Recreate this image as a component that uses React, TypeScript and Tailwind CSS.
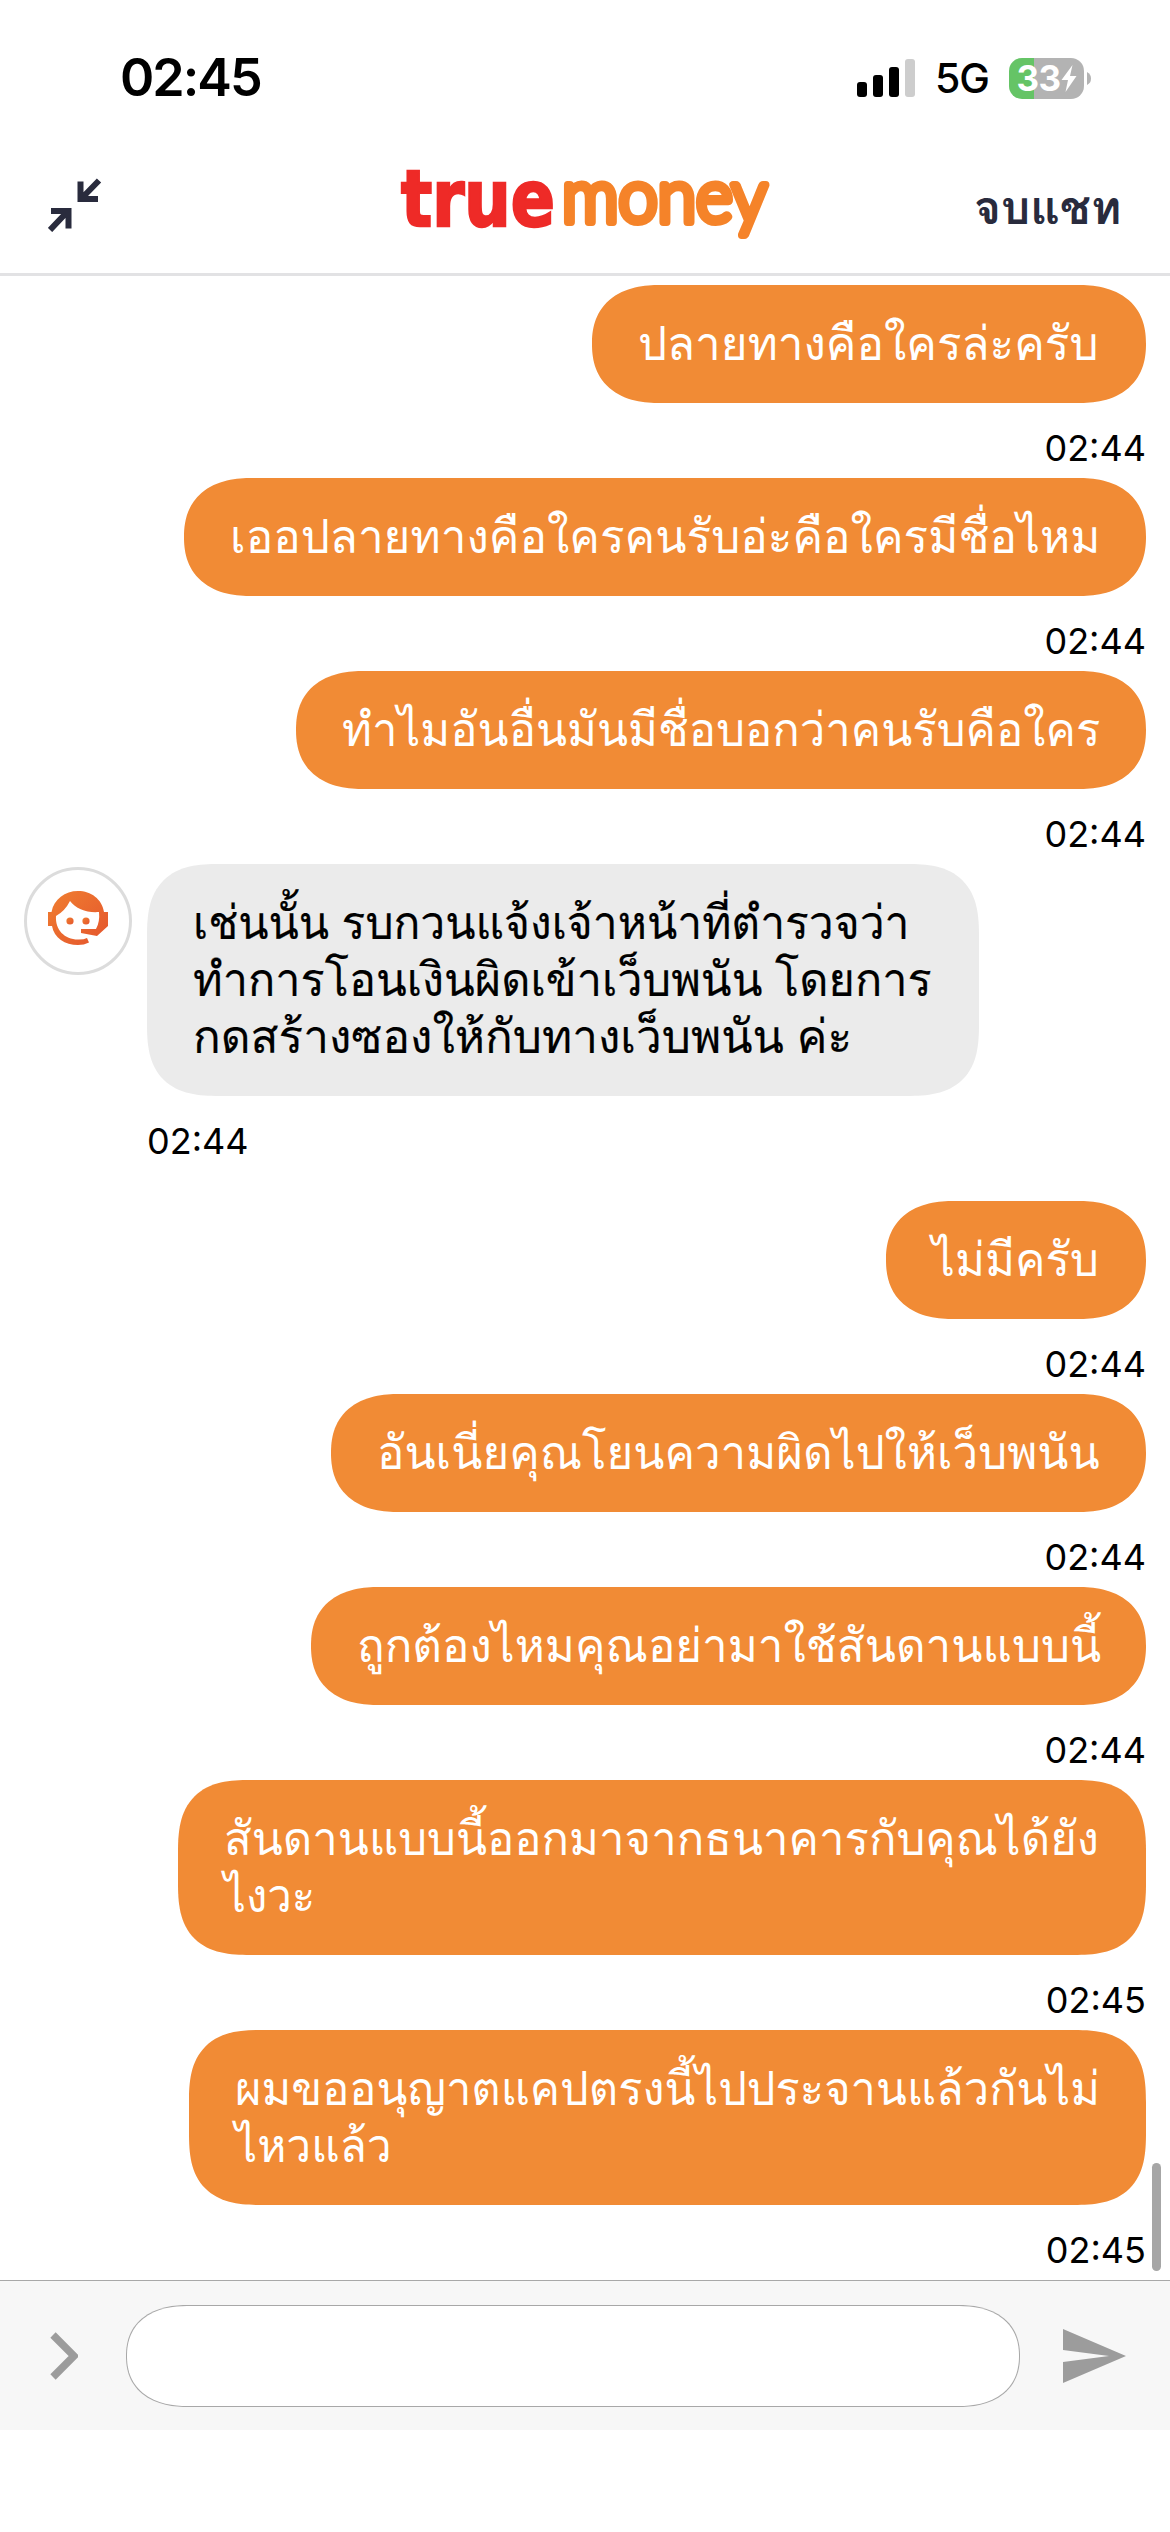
type Message = {
  from: "me" | "agent";
  lines: { text: string; fit: string }[];
  time: string;
  width: string;
};

const messages: Message[] = [
  { from: "me", lines: [{ text: "ปลายทางคือใครล่ะครับ", fit: "scale-x-[0.974]" }], time: "02:44", width: "w-[554px]" },
  { from: "me", lines: [{ text: "เออปลายทางคือใครคนรับอ่ะคือใครมีชื่อไหม", fit: "scale-x-[0.975]" }], time: "02:44", width: "w-[962px]" },
  { from: "me", lines: [{ text: "ทำไมอันอื่นมันมีชื่อบอกว่าคนรับคือใคร", fit: "scale-x-[0.967]" }], time: "02:44", width: "w-[850px]" },
  {
    from: "agent",
    lines: [
      { text: "เช่นนั้น รบกวนแจ้งเจ้าหน้าที่ตำรวจว่า", fit: "scale-x-[0.943]" },
      { text: "ทำการโอนเงินผิดเข้าเว็บพนัน โดยการ", fit: "scale-x-[0.958]" },
      { text: "กดสร้างซองให้กับทางเว็บพนัน ค่ะ", fit: "scale-x-[0.976]" },
    ],
    time: "02:44",
    width: "w-[832px]",
  },
  { from: "me", lines: [{ text: "ไม่มีครับ", fit: "scale-x-[0.97]" }], time: "02:44", width: "w-[260px]" },
  { from: "me", lines: [{ text: "อันเนี่ยคุณโยนความผิดไปให้เว็บพนัน", fit: "scale-x-[0.971]" }], time: "02:44", width: "w-[815px]" },
  { from: "me", lines: [{ text: "ถูกต้องไหมคุณอย่ามาใช้สันดานแบบนี้", fit: "scale-x-[0.972]" }], time: "02:44", width: "w-[835px]" },
  {
    from: "me",
    lines: [
      { text: "สันดานแบบนี้ออกมาจากธนาคารกับคุณได้ยัง", fit: "scale-x-[0.967]" },
      { text: "ไงวะ", fit: "scale-x-[0.93]" },
    ],
    time: "02:45",
    width: "w-[968px]",
  },
  {
    from: "me",
    lines: [
      { text: "ผมขออนุญาตแคปตรงนี้ไปประจานแล้วกันไม่", fit: "scale-x-[0.962]" },
      { text: "ไหวแล้ว", fit: "scale-x-[0.94]" },
    ],
    time: "02:45",
    width: "w-[957px]",
  },
];

function StatusBar() {
  return (
    <div className="flex h-[156px] items-center justify-between pr-[79px] pl-[120px]">
      <span className="text-[52px] leading-none font-semibold tracking-[-2px] text-black">02:45</span>
      <div className="flex items-center">
        <svg width="58" height="38" viewBox="0 0 58 38">
          <rect x="0" y="23" width="10" height="15" rx="3" />
          <rect x="16" y="16" width="10" height="22" rx="3" />
          <rect x="32" y="8" width="10" height="30" rx="3" />
          <rect x="48" y="0" width="10" height="38" rx="3" fill="#cdcdcd" />
        </svg>
        <span className="ml-[20px] w-[54px] text-[41px] leading-none font-medium tracking-[-1px]">5G</span>
        <div className="ml-[20px] flex h-[41px] w-[75px] items-center justify-center rounded-[13px] bg-[linear-gradient(90deg,#65c466_33%,#b3b3b3_33%)] text-white">
          <span className="text-[35px] leading-none font-bold tracking-[-0.5px]">33</span>
          <svg width="16" height="27" viewBox="0 0 15 27">
            <path d="M11 0 L0 15 H6.5 L4 27 L15 11 H8.5 Z" fill="white" />
          </svg>
        </div>
        <svg className="ml-[3px]" width="4" height="13" viewBox="0 0 4 13">
          <path d="M0 0 Q4 2 4 6.5 T0 13 Z" fill="#b3b3b3" />
        </svg>
      </div>
    </div>
  );
}

function Logo() {
  return (
    <svg className="h-[100px] w-[400px] overflow-visible" viewBox="0 0 400 100">
      <text x="21" y="75" fontFamily="DejaVu Sans, sans-serif" fontSize="78" fontWeight="700" fill="#ee2a27" stroke="#ee2a27" strokeWidth="2.500" textLength="154" lengthAdjust="spacingAndGlyphs">true</text>
      <text x="182" y="71" fontFamily="Lato, sans-serif" fontSize="74" fontWeight="300" fill="#f58329" stroke="#f58329" strokeWidth="8" strokeLinejoin="round" textLength="205" lengthAdjust="spacingAndGlyphs">money</text>
    </svg>
  );
}

function Header() {
  return (
    <header className="flex h-[120px] items-center justify-between border-b-[3px] border-[#e2e2e4] pr-[50px] pl-[48px] text-[#292b3d]">
      <svg className="-mt-[19px]" width="54" height="54" viewBox="0 0 54 54" fill="none" stroke="currentColor" strokeWidth="6">
        <path d="M32.500 3.500 V21 H50 M33 21 L51 2.500" />
        <path d="M3 33 H20.500 V50.500 M20 33 L2 52" />
      </svg>
      <div className="-mt-[28px] ml-[84px]"><Logo /></div>
      <button className="-mt-[16px] w-[146px] text-[46px] leading-none font-semibold whitespace-nowrap">จบแชท</button>
    </header>
  );
}

function AgentAvatar() {
  return (
    <div className="mt-[3px] flex h-[108px] w-[108px] shrink-0 items-center justify-center rounded-full border-[3px] border-[#dcdcdc]">
      <svg className="-mt-[6px]" width="60" height="54" viewBox="0 0 60 54">
        <defs>
          <linearGradient id="agent" x1="0" y1="0" x2="1" y2="1">
            <stop offset="0" stopColor="#f07f30" />
            <stop offset="1" stopColor="#e4542d" />
          </linearGradient>
        </defs>
        <g fill="url(#agent)">
          <path d="M0 21 H3.500 C6 8 17 0 30 0 C43 0 54 8 56 21 H60 V35 L49 45 L33 42 V38 H48 Q52 31 51 21 C39 22 28 18 22 10 Q17 20 8 25 C7 39 17 49 31 48.500 Q36 48.500 39 47 L41 51.500 Q36 54 30 54 C17 54 6 47 4 35 H0 Z" />
          <circle cx="22" cy="30" r="3.600" />
          <circle cx="38" cy="30" r="3.600" />
        </g>
      </svg>
    </div>
  );
}

function ChatMessage({ message }: { message: Message }) {
  const mine = message.from === "me";
  const corners =
    message.lines.length > 1
      ? "rounded-[72px] [corner-shape:superellipse(1.42)]"
      : "rounded-[68px/59px] [corner-shape:superellipse(1.23)]";
  return (
    <div className={mine ? "flex flex-col items-end pr-[24px]" : "flex gap-[15px] pb-[30px] pl-[24px]"}>
      {!mine && <AgentAvatar />}
      <div className={mine ? "flex flex-col items-end" : "flex flex-col items-start"}>
        <div
          className={`${message.width} ${corners} flex flex-col items-start px-[46px] pt-[29px] pb-[32px] text-[47px] leading-[57px] whitespace-nowrap ${
            mine ? "bg-[#f18b35] text-white" : "bg-[#ebebeb] text-black [-webkit-text-stroke:0.2px_black]"
          }`}
        >
          {message.lines.map((line) => (
            <div key={line.text} className={`origin-left ${line.fit}`}>{line.text}</div>
          ))}
        </div>
        <div className="flex h-[75px] items-center pt-[15px] text-[36px] leading-none text-black">{message.time}</div>
      </div>
    </div>
  );
}

export default function App() {
  return (
    <div className="flex h-[2532px] w-[1170px] flex-col overflow-hidden bg-white font-[Inter,Loma,sans-serif]">
      <StatusBar />
      <Header />
      <main className="relative flex h-[2004px] flex-col pt-[9px]">
        {messages.map((message, index) => (
          <ChatMessage key={index} message={message} />
        ))}
        <div className="absolute right-[9px] bottom-[9px] h-[108px] w-[9px] rounded-full bg-[#a6a6a6]" />
      </main>
      <footer className="flex h-[150px] items-center border-t border-[#a8a8a8] bg-[#f7f7f7] pl-[50px]">
        <svg width="28" height="48" viewBox="0 0 28 48" fill="none" stroke="#9c9c9c" strokeWidth="7.500">
          <path d="M3 3 L24 24 L3 45" />
        </svg>
        <div className="ml-[48px] h-[102px] w-[894px] rounded-[62px/51px] border border-[#a8a8a8] bg-white [corner-shape:superellipse(1.2)]" />
        <svg className="ml-[43px]" width="63" height="54" viewBox="0 0 63 54">
          <path d="M0 0 L63 27 L0 54 V33 L46 27 L0 21 Z" fill="#9c9c9c" />
        </svg>
      </footer>
    </div>
  );
}
